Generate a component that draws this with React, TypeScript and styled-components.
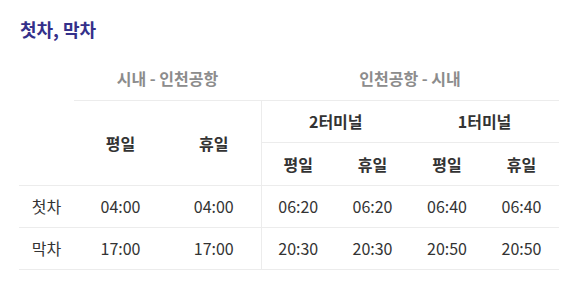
import React from "react";
import styled, { createGlobalStyle } from "styled-components";

const Global = createGlobalStyle`
  html, body { margin: 0; padding: 0; background: #fff; }
  body { font-family: "Noto Sans CJK KR", "Noto Sans", sans-serif; color: #333; }
`;

const Wrap = styled.div`
  padding: 14px 23px 0 19px;
`;

const Title = styled.h2`
  margin: 0 0 0 1px;
  font-size: 18px;
  line-height: 30px;
  font-weight: 700;
  color: #34308a;
`;

const Table = styled.table`
  margin-top: 13px;
  width: 540px;
  border-collapse: collapse;
  table-layout: fixed;
  font-size: 16px;
`;

const Row = styled.tr<{ $h: number }>`
  height: ${(p) => p.$h}px;
`;

const Cell = styled.td<{ $sep?: boolean; $head?: boolean; $muted?: boolean }>`
  padding: 0;
  text-align: center;
  vertical-align: middle;
  border-bottom: 1px solid #ececec;
  border-left: ${(p) => (p.$sep ? "1px solid #ececec" : "none")};
  font-weight: ${(p) => (p.$head ? 700 : 400)};
  color: ${(p) => (p.$muted ? "#8c8c8c" : "#333")};
`;

const Corner = styled.td`
  padding: 0;
  border-bottom: 1px solid #ececec;
`;

const widths = [55, 93, 94, 74, 75, 74, 75];

const rows = [
  { label: "첫차", times: ["04:00", "04:00", "06:20", "06:20", "06:40", "06:40"] },
  { label: "막차", times: ["17:00", "17:00", "20:30", "20:30", "20:50", "20:50"] },
];

export default function App() {
  return (
    <Wrap>
      <Global />
      <Title>첫차, 막차</Title>
      <Table>
        <colgroup>
          {widths.map((w, i) => (
            <col key={i} style={{ width: w }} />
          ))}
        </colgroup>
        <thead>
          <Row $h={43}>
            <Corner rowSpan={3} />
            <Cell colSpan={2} $head $muted>시내 - 인천공항</Cell>
            <Cell colSpan={4} $head $muted>인천공항 - 시내</Cell>
          </Row>
          <Row $h={42}>
            <Cell rowSpan={2} $head>평일</Cell>
            <Cell rowSpan={2} $head>휴일</Cell>
            <Cell colSpan={2} $head $sep>2터미널</Cell>
            <Cell colSpan={2} $head>1터미널</Cell>
          </Row>
          <Row $h={43}>
            <Cell $head $sep>평일</Cell>
            <Cell $head>휴일</Cell>
            <Cell $head>평일</Cell>
            <Cell $head>휴일</Cell>
          </Row>
        </thead>
        <tbody>
          {rows.map((r) => (
            <Row $h={42} key={r.label}>
              <Cell>{r.label}</Cell>
              {r.times.map((t, i) => (
                <Cell key={i} $sep={i === 2}>{t}</Cell>
              ))}
            </Row>
          ))}
        </tbody>
      </Table>
    </Wrap>
  );
}
